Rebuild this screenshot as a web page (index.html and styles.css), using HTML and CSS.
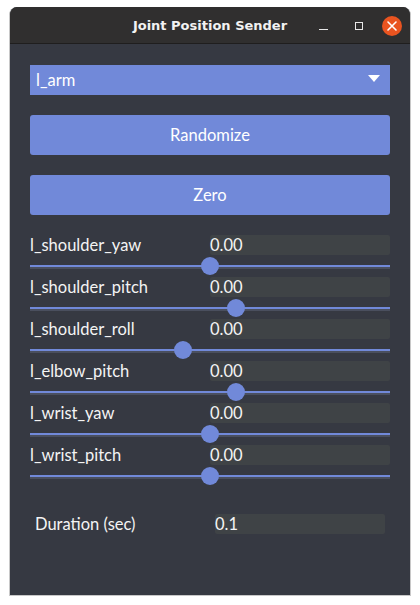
FILE: index.html
```html
<!DOCTYPE html>
<html>
<head>
<meta charset="utf-8">
<link rel="stylesheet" href="styles.css">
</head>
<body>
<div class="window">
  <div class="titlebar">
    <span class="title">Joint Position Sender</span>
    <div class="controls">
      <span class="ctl-min"></span>
      <span class="ctl-max"></span>
      <span class="ctl-close">
        <svg width="20" height="20" viewBox="0 0 20 20"><path d="M6 6 L14 14 M14 6 L6 14" stroke="#fff" stroke-width="1.6" stroke-linecap="round"/></svg>
      </span>
    </div>
  </div>
  <div class="content">
    <div class="combo">
      <span>l_arm</span>
      <svg class="caret" width="12" height="7" viewBox="0 0 12 7"><path d="M0 0 H12 L6 7 Z" fill="#fff"/></svg>
    </div>
    <button class="btn">Randomize</button>
    <button class="btn">Zero</button>
    <div class="joints">
      <div class="joint">
        <div class="jrow"><span class="jlabel">l_shoulder_yaw</span><span class="jinput">0.00</span></div>
        <div class="slider"><div class="track"></div><div class="handle" style="left:50%"></div></div>
      </div>
      <div class="joint">
        <div class="jrow"><span class="jlabel">l_shoulder_pitch</span><span class="jinput">0.00</span></div>
        <div class="slider"><div class="track"></div><div class="handle" style="left:57.2%"></div></div>
      </div>
      <div class="joint">
        <div class="jrow"><span class="jlabel">l_shoulder_roll</span><span class="jinput">0.00</span></div>
        <div class="slider"><div class="track"></div><div class="handle" style="left:42.5%"></div></div>
      </div>
      <div class="joint">
        <div class="jrow"><span class="jlabel">l_elbow_pitch</span><span class="jinput">0.00</span></div>
        <div class="slider"><div class="track"></div><div class="handle" style="left:57.2%"></div></div>
      </div>
      <div class="joint">
        <div class="jrow"><span class="jlabel">l_wrist_yaw</span><span class="jinput">0.00</span></div>
        <div class="slider"><div class="track"></div><div class="handle" style="left:50%"></div></div>
      </div>
      <div class="joint">
        <div class="jrow"><span class="jlabel">l_wrist_pitch</span><span class="jinput">0.00</span></div>
        <div class="slider"><div class="track"></div><div class="handle" style="left:50%"></div></div>
      </div>
    </div>
    <div class="duration">
      <span class="jlabel">Duration (sec)</span><span class="jinput dinput">0.1</span>
    </div>
  </div>
</div>
</body>
</html>
```
FILE: styles.css
```css
html, body {
  margin: 0;
  padding: 0;
  background: #ffffff;
}
body {
  padding: 7px 0 0 9px;
  font-family: Lato, "Open Sans", sans-serif;
}
.window {
  width: 400px;
  height: 588px;
  background: #363942;
  border-left: 1px solid #c8c8c8;
  border-right: 1px solid #c8c8c8;
  border-bottom: 1px solid #c8c8c8;
  border-radius: 8px 8px 0 0;
  overflow: hidden;
  display: flex;
  flex-direction: column;
}
.titlebar {
  height: 36px;
  background: #302f2f;
  border-bottom: 1px solid #1f1e1e;
  display: flex;
  align-items: center;
  justify-content: center;
  position: relative;
  flex: none;
}
.title {
  color: #f2f2f2;
  font-family: "DejaVu Sans", sans-serif;
  font-weight: bold;
  font-size: 13px;
}
.controls {
  position: absolute;
  right: 8px;
  top: 9px;
  display: flex;
  align-items: center;
}
.ctl-min {
  display: block;
  width: 9px;
  height: 1px;
  background: #e8e8e8;
  margin-top: 6px;
  margin-right: 27px;
}
.ctl-max {
  display: block;
  width: 6px;
  height: 6px;
  border: 1px solid #e8e8e8;
  margin-right: 19px;
}
.ctl-close {
  display: flex;
  width: 20px;
  height: 20px;
  border-radius: 50%;
  background: #e95420;
}
.content {
  padding: 21px 20px 0 20px;
  display: flex;
  flex-direction: column;
}
.combo {
  height: 30px;
  background: #7189d9;
  color: #fff;
  font-size: 16.5px;
  display: flex;
  align-items: center;
  justify-content: space-between;
  padding: 0 10px 0 6px;
}
.caret { margin-top: -3px; }
.btn {
  margin-top: 20px;
  height: 40px;
  border: none;
  border-radius: 3px;
  background: #7189d9;
  color: #fff;
  font-family: Lato, sans-serif;
  font-size: 16.5px;
  padding: 0;
}
.joints {
  margin-top: 20px;
  display: flex;
  flex-direction: column;
}
.joint {
  height: 42px;
}
.jrow {
  display: grid;
  grid-template-columns: 180px 180px;
  height: 20px;
  align-items: center;
}
.jlabel {
  color: #f4f4f4;
  font-size: 16.5px;
  line-height: 20px;
}
.jinput {
  background: #3f4346;
  border-radius: 2px;
  color: #f4f4f4;
  font-size: 16.5px;
  line-height: 20px;
  height: 20px;
}
.slider {
  position: relative;
  height: 22px;
}
.track {
  position: absolute;
  left: 0;
  right: 0;
  top: 10px;
  height: 2px;
  background: #7189d9;
  border-bottom: 2px solid #4a4f5e;
}
.handle {
  position: absolute;
  top: 2px;
  width: 18px;
  height: 18px;
  margin-left: -9px;
  border-radius: 50%;
  background: #7189d9;
}
.duration {
  margin-top: 27px;
  padding: 0 5px;
  display: grid;
  grid-template-columns: 180px 170px;
  align-items: center;
}
.dinput { height: 20px; }
```
